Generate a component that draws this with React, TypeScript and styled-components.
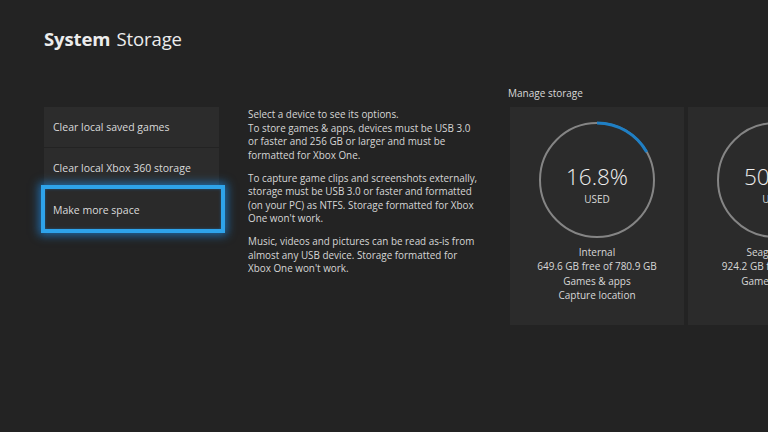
import React from "react";
import styled, { createGlobalStyle } from "styled-components";

const Global = createGlobalStyle`
  html, body { margin: 0; padding: 0; background: #232323; }
  body { width: 768px; height: 432px; overflow: hidden; font-family: "Open Sans", "Noto Sans", sans-serif; color: #dcdcdc; }
`;

const Page = styled.div`
  width: 768px;
  height: 432px;
  box-sizing: border-box;
  padding: 26px 0 0 44px;
  overflow: hidden;
  background: #232323;
`;

const Title = styled.h1`
  margin: 0;
  font-size: 18.5px;
  line-height: 26px;
  font-weight: 400;
  color: #ececec;
  letter-spacing: -0.1px;
  b { font-weight: 700; margin-right: 6px; }
`;

const Main = styled.div`
  display: flex;
  align-items: flex-start;
  margin-top: 34px;
`;

const Menu = styled.div`
  flex: none;
  width: 175px;
  margin-top: 21px;
  display: flex;
  flex-direction: column;
  gap: 1px;
`;

const Item = styled.div<{ $h: number }>`
  height: ${(p) => p.$h}px;
  background: #2c2c2c;
  display: flex;
  align-items: center;
  padding-left: 9px;
  font-size: 10.5px;
  color: #dadada;
  white-space: nowrap;
`;

const FocusItem = styled.div`
  height: 38px;
  margin: -3px -6px 0 -3px;
  border: 4px solid #2ea3ea;
  background: #2a2a2a;
  box-shadow: 0 0 9px 2px rgba(30, 140, 230, 0.7), inset 0 0 3px rgba(30, 140, 230, 0.45);
  display: flex;
  align-items: center;
  padding: 2px 0 0 8px;
  box-sizing: content-box;
  font-size: 10.5px;
  color: #dadada;
`;

const Info = styled.div`
  flex: none;
  width: 252px;
  margin-left: 29px;
  margin-top: 22px;
  font-size: 9.9px;
  line-height: 13.5px;
  color: #d6d6d6;
  white-space: nowrap;
  p { margin: 0 0 9.5px 0; }
`;

const Right = styled.div`
  flex: none;
  margin-left: 8px;
  display: flex;
  flex-direction: column;
`;

const Label = styled.div`
  font-size: 10px;
  line-height: 14px;
  color: #d8d8d8;
  margin-bottom: 7px;
`;

const Cards = styled.div`
  display: flex;
  gap: 4px;
  margin-left: 2px;
`;

const Card = styled.div`
  width: 174px;
  flex: none;
  height: 218px;
  background: #2b2b2b;
  display: flex;
  flex-direction: column;
  align-items: center;
  padding-top: 14px;
  box-sizing: border-box;
`;

const Ring = styled.div`
  position: relative;
  width: 118px;
  height: 118px;
`;

const RingText = styled.div`
  position: absolute;
  inset: 0;
  display: flex;
  flex-direction: column;
  align-items: center;
  justify-content: center;
  padding-top: 10px;
`;

const Percent = styled.div`
  font-size: 22.5px;
  line-height: 26px;
  color: #eeeeee;
  font-weight: 300;
`;

const Used = styled.div`
  font-size: 10px;
  line-height: 14px;
  color: #d8d8d8;
  margin-top: 2px;
`;

const Details = styled.div`
  margin-top: 6px;
  text-align: center;
  font-size: 10px;
  line-height: 14.3px;
  color: #d8d8d8;
  white-space: nowrap;
`;

const R = 57;
const C = 2 * Math.PI * R;

function Gauge({ pct }: { pct: number }) {
  return (
    <svg width="118" height="118" viewBox="0 0 118 118">
      <circle cx="59" cy="59" r={R} fill="none" stroke="#858585" strokeWidth="2" />
      <circle
        cx="59"
        cy="59"
        r={R}
        fill="none"
        stroke="#1f7fc4"
        strokeWidth="3"
        strokeDasharray={`${(C * pct) / 100} ${C}`}
        transform="rotate(-90 59 59)"
      />
    </svg>
  );
}

function StorageCard({ pct, label, name, free, lines }: { pct: number; label: string; name: string; free: string; lines: string[] }) {
  return (
    <Card>
      <Ring>
        <Gauge pct={pct} />
        <RingText>
          <Percent>{label}</Percent>
          <Used>USED</Used>
        </RingText>
      </Ring>
      <Details>
        <div>{name}</div>
        <div>{free}</div>
        {lines.map((l) => (
          <div key={l}>{l}</div>
        ))}
      </Details>
    </Card>
  );
}

export default function App() {
  return (
    <Page>
      <Global />
      <Title>
        <b>System</b>Storage
      </Title>
      <Main>
        <Menu>
          <Item $h={40}>Clear local saved games</Item>
          <Item $h={39}>Clear local Xbox 360 storage</Item>
          <FocusItem>Make more space</FocusItem>
        </Menu>
        <Info>
          <p>
            Select a device to see its options.
            <br />
            To store games &amp; apps, devices must be USB 3.0
            <br />
            or faster and 256 GB or larger and must be
            <br />
            formatted for Xbox One.
          </p>
          <p>
            To capture game clips and screenshots externally,
            <br />
            storage must be USB 3.0 or faster and formatted
            <br />
            (on your PC) as NTFS. Storage formatted for Xbox
            <br />
            One won't work.
          </p>
          <p>
            Music, videos and pictures can be read as-is from
            <br />
            almost any USB device. Storage formatted for
            <br />
            Xbox One won't work.
          </p>
        </Info>
        <Right>
          <Label>Manage storage</Label>
          <Cards>
            <StorageCard pct={16.8} label="16.8%" name="Internal" free="649.6 GB free of 780.9 GB" lines={["Games & apps", "Capture location"]} />
            <StorageCard pct={50.3} label="50.3%" name="Seagate 2TB" free="924.2 GB free of 1.8 TB" lines={["Games & apps"]} />
          </Cards>
        </Right>
      </Main>
    </Page>
  );
}
